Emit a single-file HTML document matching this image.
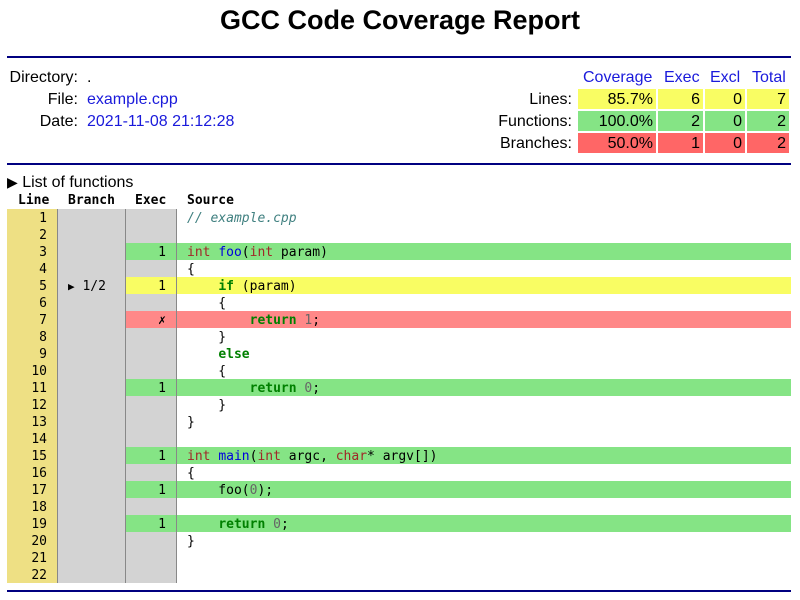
<!DOCTYPE html>
<html><head><meta charset="utf-8"><style>
body{margin:0;width:800px;height:600px;background:#fff;font-family:"Liberation Sans",sans-serif;position:relative;overflow:hidden;color:#000}
.a{position:absolute}
h1{position:absolute;left:0;width:800px;top:5px;margin:0;text-align:center;font-size:27px;font-weight:bold}
.hr{position:absolute;left:7px;width:784px;height:2px;background:#000080}
.t{font-size:16px;white-space:nowrap}
.lk{color:#1a1adb}
.c{position:absolute;height:20px;font-size:16px;text-align:right;line-height:21px;box-sizing:border-box;padding-right:3px}
.y{background:#f9fd63}.g{background:#85e485}.r{background:#ff6666}
.m{font-family:"DejaVu Sans Mono",monospace;font-size:13px;white-space:pre}
.ty{color:#a02828}.fn{color:#0000dd}.kw{color:#008000;font-weight:bold}.cm{color:#408080;font-style:italic}.nu{color:#666}
</style></head><body>
<h1>GCC Code Coverage Report</h1>
<div class="hr" style="top:56px"></div>
<div class="a t" style="right:722px;top:69px">Directory:</div><div class="a t" style="left:87px;top:69px">.</div>
<div class="a t" style="right:722px;top:91px">File:</div><div class="a t lk" style="left:87px;top:91px">example.cpp</div>
<div class="a t" style="right:722px;top:113px">Date:</div><div class="a t lk" style="left:87px;top:113px">2021-11-08 21:12:28</div>

<div class="a t lk" style="left:583px;top:69px">Coverage</div>
<div class="a t lk" style="left:664px;top:69px">Exec</div>
<div class="a t lk" style="left:710px;top:69px">Excl</div>
<div class="a t lk" style="left:752px;top:69px">Total</div>
<div class="a t" style="right:228px;top:91px">Lines:</div>
<div class="a t" style="right:228px;top:113px">Functions:</div>
<div class="a t" style="right:228px;top:135px">Branches:</div>
<div class="c y" style="left:578px;width:78px;top:89px">85.7%</div><div class="c y" style="left:658px;width:45px;top:89px">6</div><div class="c y" style="left:705px;width:40px;top:89px">0</div><div class="c y" style="left:747px;width:42px;top:89px">7</div>
<div class="c g" style="left:578px;width:78px;top:111px">100.0%</div><div class="c g" style="left:658px;width:45px;top:111px">2</div><div class="c g" style="left:705px;width:40px;top:111px">0</div><div class="c g" style="left:747px;width:42px;top:111px">2</div>
<div class="c r" style="left:578px;width:78px;top:133px">50.0%</div><div class="c r" style="left:658px;width:45px;top:133px">1</div><div class="c r" style="left:705px;width:40px;top:133px">0</div><div class="c r" style="left:747px;width:42px;top:133px">2</div>
<div class="hr" style="top:163px"></div>

<div class="a t" style="left:7px;top:174px"><span style="font-size:14px">&#9654;</span> List of functions</div>
<div class="a m" style="left:18px;top:193px;font-weight:bold">Line</div>
<div class="a m" style="left:68px;top:193px;font-weight:bold">Branch</div>
<div class="a m" style="left:135px;top:193px;font-weight:bold">Exec</div>
<div class="a m" style="left:187px;top:193px;font-weight:bold">Source</div>

<div class="a" style="left:7px;top:209px;width:50px;height:374px;background:#eee084"></div>
<div class="a" style="left:57px;top:209px;width:67px;height:374px;background:#d3d3d3;border-left:1px solid #888;border-right:1px solid #888"></div>
<div class="a" style="left:126px;top:209px;width:50px;height:374px;background:#d3d3d3"></div>

<div class="a" style="left:126px;top:243px;width:665px;height:17px;background:#85e485"></div>
<div class="a" style="left:126px;top:277px;width:665px;height:17px;background:#f9fd63"></div>
<div class="a" style="left:126px;top:311px;width:665px;height:17px;background:#ff8888"></div>
<div class="a" style="left:126px;top:379px;width:665px;height:17px;background:#85e485"></div>
<div class="a" style="left:126px;top:447px;width:665px;height:17px;background:#85e485"></div>
<div class="a" style="left:126px;top:481px;width:665px;height:17px;background:#85e485"></div>
<div class="a" style="left:126px;top:515px;width:665px;height:17px;background:#85e485"></div>
<div class="a" style="left:176px;top:209px;width:1px;height:374px;background:#888"></div>

<div class="a m" style="left:7px;top:210px;width:40px;text-align:right;line-height:17px">1
2
3
4
5
6
7
8
9
10
11
12
13
14
15
16
17
18
19
20
21
22</div>
<div class="a m" style="left:68px;top:278px;line-height:17px"><span style="font-size:11px">&#9654;</span> 1/2</div>
<div class="a m" style="left:125px;top:210px;width:41px;text-align:right;line-height:17px">

1

1

✗



1



1

1

1</div>
<div class="a m" style="left:187px;top:210px;line-height:17px"><span class="cm">// example.cpp</span>

<span class="ty">int</span> <span class="fn">foo</span>(<span class="ty">int</span> param)
{
    <span class="kw">if</span> (param)
    {
        <span class="kw">return</span> <span class="nu">1</span>;
    }
    <span class="kw">else</span>
    {
        <span class="kw">return</span> <span class="nu">0</span>;
    }
}

<span class="ty">int</span> <span class="fn">main</span>(<span class="ty">int</span> argc, <span class="ty">char</span>* argv[])
{
    foo(<span class="nu">0</span>);

    <span class="kw">return</span> <span class="nu">0</span>;
}

</div>
<div class="hr" style="top:590px"></div>
</body></html>
